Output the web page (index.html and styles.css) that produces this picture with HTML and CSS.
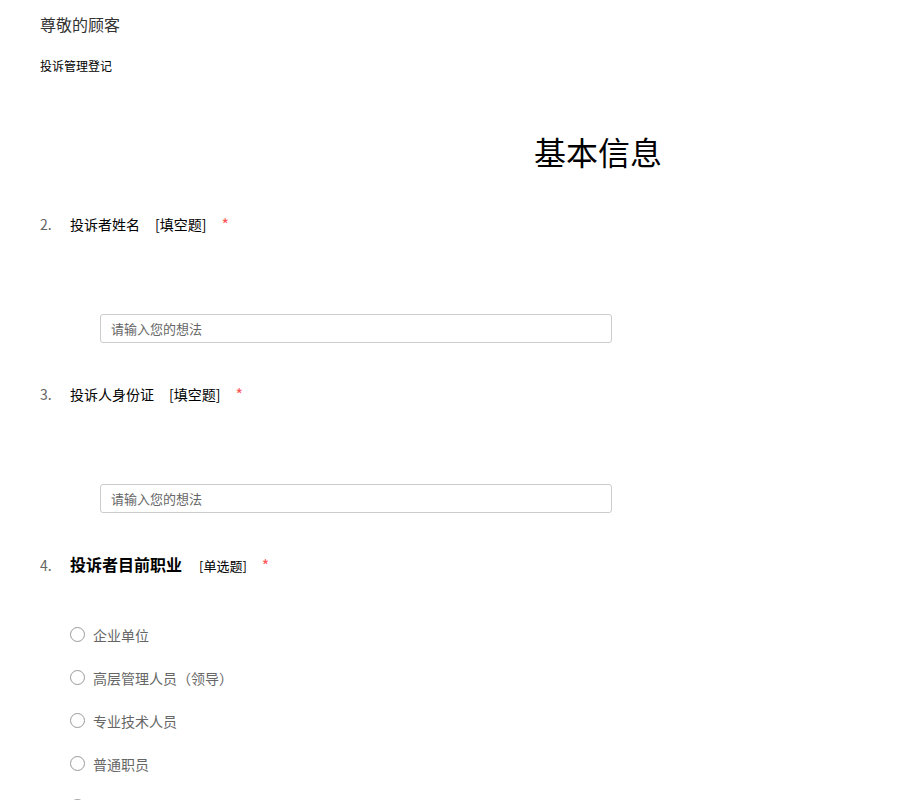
FILE: index.html
```html
<!DOCTYPE html>
<html lang="zh-CN">
<head>
  <meta charset="UTF-8" />
  <meta name="viewport" content="width=device-width, initial-scale=1.0" />
  <title>投诉管理登记</title>
  <link rel="stylesheet" href="styles.css">
</head>
<body>

  <div class="survey">
    <div class="survey-head">
      <h1 class="greeting">尊敬的顾客</h1>
      <p class="subtitle">投诉管理登记</p>
    </div>

    <h2 class="section-title">基本信息</h2>

    <div class="question">
      <div class="q-title">
        <span class="q-num">2.</span>
        <span class="q-text">投诉者姓名</span>
        <span class="q-type">[填空题]</span>
        <span class="q-req">*</span>
      </div>
      <div class="q-body">
        <input type="text" class="text-input" placeholder="请输入您的想法" />
      </div>
    </div>

    <div class="question">
      <div class="q-title">
        <span class="q-num">3.</span>
        <span class="q-text">投诉人身份证</span>
        <span class="q-type">[填空题]</span>
        <span class="q-req">*</span>
      </div>
      <div class="q-body">
        <input type="text" class="text-input" placeholder="请输入您的想法" />
      </div>
    </div>

    <div class="question">
      <div class="q-title">
        <span class="q-num">4.</span>
        <span class="q-text bold">投诉者目前职业</span>
        <span class="q-type">[单选题]</span>
        <span class="q-req">*</span>
      </div>
      <ul class="options">
        <li><span class="radio"></span>企业单位</li>
        <li><span class="radio"></span>高层管理人员（领导）</li>
        <li><span class="radio"></span>专业技术人员</li>
        <li><span class="radio"></span>普通职员</li>
        <li><span class="radio"></span>其他</li>
      </ul>
    </div>
  </div>

</body>
</html>
```

FILE: styles.css
```css
* {
  margin: 0;
  padding: 0;
  box-sizing: border-box;
}

body {
  background-color: #fff;
  color: #333;
  font-family: "Noto Sans CJK SC", "Noto Sans", sans-serif;
}

.survey {
  padding: 11px 40px 0;
}

.greeting {
  font-size: 16px;
  font-weight: normal;
  line-height: 26px;
  color: #333;
}

.subtitle {
  margin-top: 20px;
  font-size: 12px;
  line-height: 18px;
  color: #000;
}

.section-title {
  margin-top: 56px;
  padding: 0 0 2px 296px;
  font-size: 32px;
  font-weight: normal;
  line-height: 40px;
  color: #000;
  text-align: center;
}

.question {
  margin-top: 40px;
}

.q-title {
  display: flex;
  align-items: baseline;
  font-size: 14px;
  line-height: 22px;
  color: #000;
}

.q-num {
  width: 30px;
  font-size: 14px;
  color: #666;
}

.q-text.bold {
  font-size: 16px;
  font-weight: bold;
}

.q-type {
  margin-left: 15px;
}

.bold + .q-type {
  font-size: 13px;
  margin-left: 17px;
}

.q-req {
  margin-left: 15px;
  font-size: 16px;
  color: #f55;
  align-self: center;
  line-height: 14px;
}

.q-body {
  padding: 79px 0 0 60px;
}

.text-input {
  display: block;
  width: 512px;
  height: 29px;
  padding: 0 10px;
  border: 1px solid #ccc;
  border-radius: 3px;
  font-family: inherit;
  font-size: 13px;
  color: #333;
  outline: none;
}

.text-input::placeholder {
  color: #666;
}

.options {
  list-style: none;
  padding: 36px 0 0 30px;
}

.options li {
  display: flex;
  align-items: center;
  height: 43px;
  font-size: 14px;
  color: #666;
}

.radio {
  width: 15px;
  height: 15px;
  margin-right: 8px;
  border: 1px solid #999;
  border-radius: 50%;
  flex-shrink: 0;
}
```
